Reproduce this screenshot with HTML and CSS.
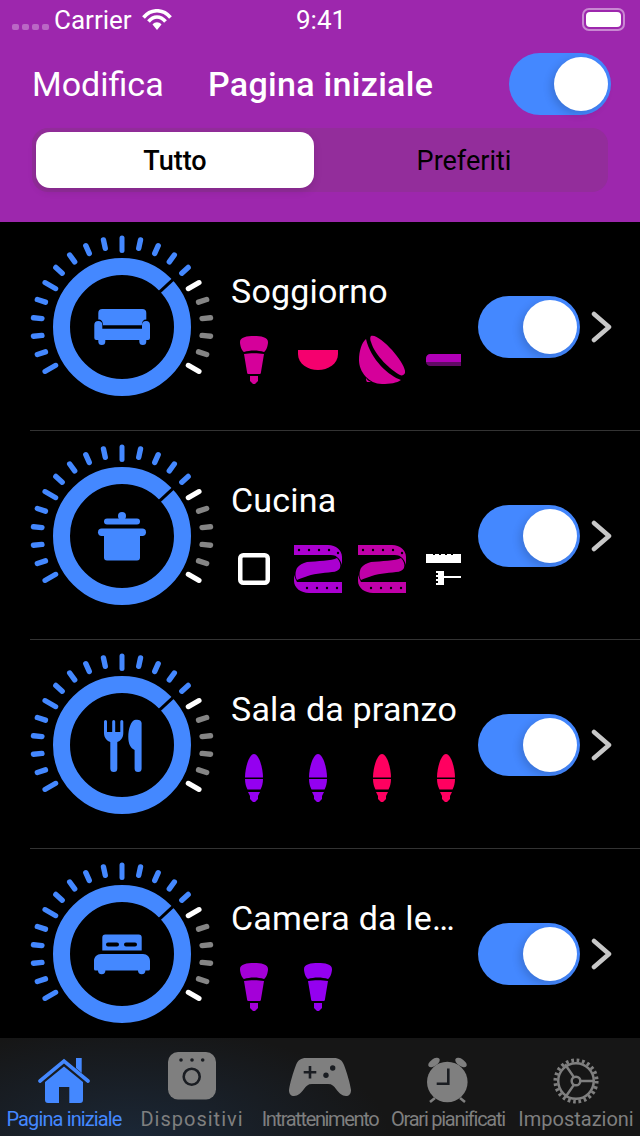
FILE: index.html
```html
<!DOCTYPE html>
<html lang="it">
<head>
    <meta charset="UTF-8">
    <meta name="viewport" content="width=device-width, initial-scale=1.0">
    <title>Pagina iniziale</title>
    <link rel="stylesheet" href="styles.css">
</head>
<body>
    <!-- shared shapes -->
    <svg class="sprite" xmlns="http://www.w3.org/2000/svg">
        <symbol id="dial" viewBox="0 0 184 184">
            <g class="tick tick-blue">
                <line x1="92" y1="3" x2="92" y2="11.5" transform="rotate(-108 92 92)"/>
                <line x1="92" y1="3" x2="92" y2="11.5" transform="rotate(-96 92 92)"/>
                <line x1="92" y1="3" x2="92" y2="11.5" transform="rotate(-84 92 92)"/>
                <line x1="92" y1="3" x2="92" y2="11.5" transform="rotate(-72 92 92)"/>
                <line x1="92" y1="3" x2="92" y2="11.5" transform="rotate(-48 92 92)"/>
                <line x1="92" y1="3" x2="92" y2="11.5" transform="rotate(-36 92 92)"/>
                <line x1="92" y1="3" x2="92" y2="11.5" transform="rotate(-24 92 92)"/>
                <line x1="92" y1="3" x2="92" y2="11.5" transform="rotate(-12 92 92)"/>
                <line x1="92" y1="3" x2="92" y2="11.5" transform="rotate(12 92 92)"/>
                <line x1="92" y1="3" x2="92" y2="11.5" transform="rotate(24 92 92)"/>
                <line x1="92" y1="3" x2="92" y2="11.5" transform="rotate(36 92 92)"/>
                <line x1="92" y1="3" x2="92" y2="11.5" transform="rotate(48 92 92)"/>
                <line class="tick-major" x1="92" y1="3" x2="92" y2="15.5" transform="rotate(-120 92 92)"/>
                <line class="tick-major" x1="92" y1="3" x2="92" y2="15.5" transform="rotate(-60 92 92)"/>
                <line class="tick-major" x1="92" y1="3" x2="92" y2="15.5"/>
            </g>
            <g class="tick tick-gray">
                <line x1="92" y1="3" x2="92" y2="11.5" transform="rotate(72 92 92)"/>
                <line x1="92" y1="3" x2="92" y2="11.5" transform="rotate(84 92 92)"/>
                <line x1="92" y1="3" x2="92" y2="11.5" transform="rotate(96 92 92)"/>
                <line x1="92" y1="3" x2="92" y2="11.5" transform="rotate(108 92 92)"/>
            </g>
            <g class="tick tick-white">
                <line class="tick-major" x1="92" y1="3" x2="92" y2="15.5" transform="rotate(60 92 92)"/>
                <line class="tick-major" x1="92" y1="3" x2="92" y2="15.5" transform="rotate(120 92 92)"/>
            </g>
            <circle class="ring" cx="92" cy="92" r="60.5"/>
            <line class="ring-gap" x1="128.6" y1="57.9" x2="144" y2="43.6"/>
        </symbol>

        <symbol id="cone" viewBox="0 0 46 52">
            <path d="M9 8C9 3 16 2 23 2s14 1 14 6c0 4-2 9-4 10-6-2-14-2-20 0-2-1-4-6-4-10z"/>
            <path d="M13 20c6-1 14-1 20 0l-3 18c0 2-1 2-2 2H18c-1 0-2 0-2-2z"/>
            <path d="M19 42h8v5l-3 3h-2l-3-3z"/>
        </symbol>
        <symbol id="bowl" viewBox="0 0 46 52">
            <path d="M3 16h40v4c0 10-10 16-20 16S3 30 3 20z"/>
        </symbol>
        <symbol id="globe" viewBox="0 0 46 52">
            <path d="M12 2c4-2 14 6 21 14s14 18 13 23c-1 2-3 3-5 2C32 36 16 22 12 8c-1-2-1-5 0-6z"/>
            <path d="M7 5C3 8 0 17 0 26c0 12 10 24 23 24 8 0 15-1 19-4C30 42 12 26 7 5z"/>
            <path d="M7 44c1 2 3 3 5 4H8c-1-1-1-3-1-4z"/>
        </symbol>
        <symbol id="bar" viewBox="0 0 46 52">
            <path class="bar-top" d="M7 20h39v8H3v-4c0-2 2-4 4-4z"/>
            <path class="bar-low" d="M3 28h43v4H7c-2 0-4-2-4-4z"/>
        </symbol>
        <symbol id="square" viewBox="0 0 46 52">
            <rect class="square-line" x="9.250" y="12.250" width="27.500" height="27.500" rx="3"/>
        </symbol>
        <symbol id="strip" viewBox="-1 0 48 52">
            <path d="M-1 2h34c8 0 14 5 14 12v8c-1-3-2-6-5-8-2-2-5-2-9-2H-1z"/>
            <path d="M42 15c3 3 4 7 3 10-1 2-4 4-8 4-9 1-20 2-27 5-3 1-6 2-8 3-2-3-2-8 0-12 2-3 6-5 10-6 10-1 25-1 30-4z"/>
            <path d="M-1 32c1 3 2 5 3 7h45v11H14C6 50-1 45-1 38z"/>
            <g class="strip-dots">
                <circle cx="4" cy="7" r="1.2"/><circle cx="14" cy="7" r="1.2"/><circle cx="24" cy="7" r="1.2"/><circle cx="34" cy="7" r="1.2"/><circle cx="43" cy="10" r="1.2"/>
                <circle cx="12" cy="45" r="1.2"/><circle cx="22" cy="45" r="1.2"/><circle cx="32" cy="45" r="1.2"/><circle cx="42" cy="45" r="1.2"/>
            </g>
        </symbol>
        <symbol id="plug" viewBox="0 0 46 52">
            <path d="M3 11h7v1h2v-1h4v1h2v-1h4v1h2v-1h4v1h2v-1h8v9H3z"/>
            <path d="M15 28h6v5h18v2H21v7h-8v-2h2v-2h-2v-2h2v-2h-2v-2h2v-2h-2v-2h2z"/>
        </symbol>
        <symbol id="candle" viewBox="0 0 46 52">
            <path d="M23 2c5 0 9 14 9 23.500H14C14 16 18 2 23 2z"/>
            <path d="M14 27h18c0 4-1 8-2.500 10.500h-13C15 35 14 31 14 27z"/>
            <path d="M17 40h12l-2 4v3l-3 3h-2l-3-3v-3z"/>
        </symbol>
    </svg>

    <div class="page">
        <header class="top">
            <div class="status">
                <div class="signal"><i></i><i></i><i></i><i></i></div>
                <span class="carrier">Carrier</span>
                <svg class="wifi" viewBox="0 0 30 22">
                    <path d="M1.5 8.5C9-.5 21-.5 28.500 8.500"/>
                    <path d="M6.500 12.500C11.500 6.500 18.500 6.500 23.500 12.500"/>
                    <path class="wifi-tip" d="M10.500 15.500C13 12.500 17 12.500 19.500 15.500L15 21z"/>
                </svg>
                <span class="clock">9:41</span>
                <div class="battery"><b></b></div>
            </div>
            <div class="nav">
                <span class="nav-edit">Modifica</span>
                <span class="nav-title">Pagina iniziale</span>
                <div class="switch switch-nav"><span class="knob"></span></div>
            </div>
            <div class="segment">
                <div class="seg-item seg-on">Tutto</div>
                <div class="seg-item">Preferiti</div>
            </div>
        </header>

        <main class="rooms">
            <section class="room">
                <svg class="dial" viewBox="0 0 184 184">
                    <use href="#dial"/>
                    <g class="room-icon">
                        <path d="M68.300 78a4 4 0 0 1 4-4h40a4 4 0 0 1 4 4v6.500c-3 0-4.500 2-4.500 5.800H73c0-3.800-1.700-5.800-4.700-5.800z"/>
                        <path d="M64.300 90a4 4 0 0 1 8 0v3.700H112V90a4 4 0 0 1 8 0v13a2 2 0 0 1-2 2h-1.700v1.500a3.500 3.500 0 0 1-7 0V105H75.300v1.500a3.500 3.500 0 0 1-7 0V105h-2a2 2 0 0 1-2-2z"/>
                    </g>
                </svg>
                <div class="room-info">
                    <h2 class="room-name">Soggiorno</h2>
                    <div class="bulbs">
                        <svg class="bulb c-pink"><use href="#cone"/></svg>
                        <svg class="bulb c-rose"><use href="#bowl"/></svg>
                        <svg class="bulb c-pink"><use href="#globe"/></svg>
                        <svg class="bulb c-pink"><use href="#bar"/></svg>
                    </div>
                </div>
                <div class="switch"><span class="knob"></span></div>
                <svg class="chevron" viewBox="0 0 22 32"><path d="M4 3l15 13L4 29"/></svg>
            </section>

            <section class="room">
                <svg class="dial" viewBox="0 0 184 184">
                    <use href="#dial"/>
                    <g class="room-icon">
                        <circle cx="92" cy="72" r="4"/>
                        <rect x="74" y="74.500" width="36" height="6" rx="3"/>
                        <rect x="68" y="84.500" width="48" height="7.500" rx="3.700"/>
                        <path d="M74 91h36v22.500a3 3 0 0 1-3 3H77a3 3 0 0 1-3-3z"/>
                    </g>
                </svg>
                <div class="room-info">
                    <h2 class="room-name">Cucina</h2>
                    <div class="bulbs">
                        <svg class="bulb c-white"><use href="#square"/></svg>
                        <svg class="bulb bulb-wide c-violet"><use href="#strip"/></svg>
                        <svg class="bulb bulb-wide c-magenta"><use href="#strip"/></svg>
                        <svg class="bulb c-white"><use href="#plug"/></svg>
                    </div>
                </div>
                <div class="switch"><span class="knob"></span></div>
                <svg class="chevron" viewBox="0 0 22 32"><path d="M4 3l15 13L4 29"/></svg>
            </section>

            <section class="room">
                <svg class="dial" viewBox="0 0 184 184">
                    <use href="#dial"/>
                    <g class="room-icon">
                        <path d="M74 68.500a1.500 1.500 0 0 1 3 0V79h5.200V68.500a1.500 1.500 0 0 1 3 0V79h5.100V68.500a1.500 1.500 0 0 1 3 0V80c0 5-3 8-6 9v26.500a3.500 3.500 0 0 1-7 0V89c-3-1-6.300-4-6.300-9z"/>
                        <path d="M104.500 67c3.500-1 7.100 0 7.100 3v45.500a3.500 3.500 0 0 1-7 0V97c-4.600-2-6.300-7-6.300-13 0-8 2.700-16 6.200-17z"/>
                    </g>
                </svg>
                <div class="room-info">
                    <h2 class="room-name">Sala da pranzo</h2>
                    <div class="bulbs">
                        <svg class="bulb c-purple"><use href="#candle"/></svg>
                        <svg class="bulb c-purple"><use href="#candle"/></svg>
                        <svg class="bulb c-red"><use href="#candle"/></svg>
                        <svg class="bulb c-red"><use href="#candle"/></svg>
                    </div>
                </div>
                <div class="switch"><span class="knob"></span></div>
                <svg class="chevron" viewBox="0 0 22 32"><path d="M4 3l15 13L4 29"/></svg>
            </section>

            <section class="room">
                <svg class="dial" viewBox="0 0 184 184">
                    <use href="#dial"/>
                    <g class="room-icon">
                        <path fill-rule="evenodd" d="M75.300 72.500h33.400a3 3 0 0 1 3 3v13H72.300v-13a3 3 0 0 1 3-3zM78 80.500a2 2 0 0 0 0 4h9a2 2 0 0 0 0-4zM96 80.500a2 2 0 0 0 0 4h9a2 2 0 0 0 0-4z"/>
                        <path d="M71 92h42c4 0 7 3 7 7v8a1.500 1.500 0 0 1-1.500 1.500h-3.100a3.700 3.700 0 0 1-7.400 0H75.400a3.700 3.700 0 0 1-7.400 0h-2.500A1.500 1.500 0 0 1 64 107v-8c0-4 3-7 7-7z"/>
                    </g>
                </svg>
                <div class="room-info">
                    <h2 class="room-name">Camera da letto</h2>
                    <div class="bulbs">
                        <svg class="bulb c-grape"><use href="#cone"/></svg>
                        <svg class="bulb c-purple"><use href="#cone"/></svg>
                    </div>
                </div>
                <div class="switch"><span class="knob"></span></div>
                <svg class="chevron" viewBox="0 0 22 32"><path d="M4 3l15 13L4 29"/></svg>
            </section>
        </main>

        <nav class="tabs">
            <div class="tab tab-on">
                <svg class="tab-icon" width="52" height="48" viewBox="0 0 52 48">
                    <path class="home-roof" d="M2 24L26 4l24 20"/>
                    <path d="M38 1h5.700v15L38 11z"/>
                    <path fill-rule="evenodd" d="M26 9.500L45 25v18a3 3 0 0 1-3 3H31.300V30H21v16H10a3 3 0 0 1-3-3V25z"/>
                </svg>
                <span class="tab-label lbl-home">Pagina iniziale</span>
            </div>
            <div class="tab">
                <svg class="tab-icon icon-dev" width="48" height="48" viewBox="0 0 48 48">
                    <rect y="0" width="48" height="47.500" rx="10"/>
                    <circle class="cut" cx="13" cy="8" r="1.800"/><circle class="cut" cx="24" cy="8" r="1.800"/><circle class="cut" cx="34.700" cy="8" r="1.800"/>
                    <circle class="cut-line" cx="23.700" cy="24.700" r="8"/>
                </svg>
                <span class="tab-label lbl-dev">Dispositivi</span>
            </div>
            <div class="tab">
                <svg class="tab-icon" width="62" height="48" viewBox="0 0 62 48">
                    <path d="M17 1h28c5 0 8 2 10 7 3 8 6 18 7 25 0 4-2 6-5 6-4 0-7-3-10-7-2-3-4-5-8-5H23c-4 0-6 2-8 5-3 4-6 7-10 7-3 0-5-2-5-6 1-7 4-17 7-25 2-5 5-7 10-7z"/>
                    <path class="cut-line" d="M21 9v12.600M14.700 15.300h12.600"/>
                    <circle class="cut" cx="43.700" cy="11" r="2.700"/><circle class="cut" cx="37" cy="18.300" r="2.700"/>
                </svg>
                <span class="tab-label lbl-game">Intrattenimento</span>
            </div>
            <div class="tab">
                <svg class="tab-icon" width="48" height="48" viewBox="0 0 48 48">
                    <ellipse cx="10" cy="5.500" rx="6.500" ry="3.500" transform="rotate(-35 10 5.500)"/>
                    <ellipse cx="37" cy="5.500" rx="6.500" ry="3.500" transform="rotate(35 37 5.500)"/>
                    <path class="clock-leg" d="M6 45l5-4M41 45l-5-4"/>
                    <circle cx="23.300" cy="25" r="20.300"/>
                    <path class="cut-line" d="M24.300 11.500V26.700H12.700"/>
                </svg>
                <span class="tab-label lbl-clock">Orari pianificati</span>
            </div>
            <div class="tab">
                <svg class="tab-icon gear" width="50" height="48" viewBox="0 0 50 50">
                    <circle class="gear-teeth" cx="25" cy="25" r="21.500"/>
                    <circle class="gear-line" cx="25" cy="25" r="18.500"/>
                    <circle class="gear-line" cx="25" cy="25" r="4.500"/>
                    <path class="gear-line" d="M29.500 25H43.500M22.800 21L13.500 7.500M22.800 29L13.500 42.500"/>
                </svg>
                <span class="tab-label lbl-gear">Impostazioni</span>
            </div>
        </nav>
    </div>
</body>
</html>
```

FILE: styles.css
```css
* {
    box-sizing: border-box;
}
body {
    margin: 0;
    background: #000;
    font-family: Roboto, "Liberation Sans", sans-serif;
    color: #fff;
}
.sprite {
    display: none;
}
.page {
    width: 640px;
    height: 1136px;
    display: flex;
    flex-direction: column;
    overflow: hidden;
}

/* header */
.top {
    height: 222px;
    flex: none;
    background: #9d27ad;
}
.status {
    height: 40px;
    display: flex;
    align-items: center;
    padding-left: 12px;
    position: relative;
}
.signal {
    display: flex;
    gap: 3px;
    margin-top: 14px;
}
.signal i {
    width: 7px;
    height: 6px;
    border-radius: 2px;
    background: rgba(255, 255, 255, 0.3);
}
.carrier {
    margin-left: 5px;
    font-size: 26px;
}
.wifi {
    width: 30px;
    height: 22px;
    margin-left: 10px;
    fill: none;
    stroke: #fff;
    stroke-width: 3.6;
}
.wifi-tip {
    fill: #fff;
    stroke: none;
}
.clock {
    position: absolute;
    left: 296px;
    top: 5px;
    font-size: 26px;
}
.battery {
    position: absolute;
    left: 582px;
    top: 8px;
    width: 43px;
    height: 23px;
    padding: 2px;
    border: 2px solid rgba(255, 255, 255, 0.45);
    border-radius: 7px;
}
.battery b {
    display: block;
    height: 100%;
    background: #fff;
    border-radius: 4px;
}
.nav {
    display: flex;
    align-items: center;
    margin-top: 13px;
    padding: 0 29px 0 32px;
}
.nav-edit {
    width: 176px;
    font-size: 34px;
}
.nav-title {
    font-size: 34px;
    font-weight: 500;
    letter-spacing: 0.3px;
}
.switch {
    width: 102px;
    height: 62px;
    flex: none;
    display: flex;
    align-items: center;
    justify-content: flex-end;
    padding-right: 3px;
    border-radius: 31px;
    background: #4488ff;
}
.switch-nav {
    margin-left: auto;
}
.knob {
    width: 54px;
    height: 54px;
    border-radius: 50%;
    background: #fff;
    box-shadow: -3px 3px 8px rgba(0, 0, 0, 0.16);
}
.segment {
    display: flex;
    width: 576px;
    height: 64px;
    margin: 13px 0 0 32px;
    padding: 4px;
    border-radius: 16px;
    background: #932d9b;
}
.seg-item {
    flex: 1;
    display: flex;
    align-items: center;
    justify-content: center;
    padding: 1px 0 0 10px;
    color: #000;
    font-size: 27px;
}
.seg-on {
    flex: none;
    width: 278px;
    padding-left: 0;
    border-radius: 14px;
    background: #fff;
    font-weight: 500;
    box-shadow: 0 3px 8px rgba(0, 0, 0, 0.12);
}

/* room list */
.rooms {
    flex: 1;
    min-height: 0;
    overflow: hidden;
}
.room {
    height: 209px;
    margin-left: 30px;
    padding-top: 2px;
    display: flex;
    align-items: center;
    border-bottom: 1px solid #333;
}
.dial {
    width: 184px;
    height: 184px;
    flex: none;
}
.tick {
    stroke-width: 5.4;
    stroke-linecap: round;
}
.tick-major {
    stroke-width: 5;
}
.tick-blue {
    stroke: #4488ff;
}
.tick-gray {
    stroke: #858585;
}
.tick-white {
    stroke: #fff;
}
.ring {
    fill: none;
    stroke: #4488ff;
    stroke-width: 17;
}
.ring-gap {
    stroke: #000;
    stroke-width: 3;
}
.room-icon {
    fill: #4488ff;
}
.room-info {
    width: 232px;
    flex: none;
    margin: 0 16px 0 16px;
    padding: 3px 1px 0 1px;
}
.room-name {
    margin: 0;
    font-size: 34px;
    font-weight: 400;
    letter-spacing: 0.2px;
    line-height: 40px;
    white-space: nowrap;
    overflow: hidden;
    text-overflow: ellipsis;
}
.bulbs {
    display: flex;
    gap: 18px;
    height: 52px;
    margin-top: 23px;
    overflow: hidden;
}
.bulb {
    width: 46px;
    height: 52px;
    flex: none;
    overflow: visible;
    fill: currentColor;
}
.bulb-wide {
    width: 48px;
    margin: 0 -1px;
}
.c-pink { color: #d5009a; }
.c-rose { color: #f5006e; }
.c-violet { color: #aa00d0; }
.c-magenta { color: #c000a8; }
.c-purple { color: #9400f0; }
.c-grape { color: #a400d8; }
.c-red { color: #ff0060; }
.c-white { color: #fff; }
.bar-top {
    fill: #b200b8;
}
.bar-low {
    fill: #620a66;
}
.square-line {
    fill: none;
    stroke: currentColor;
    stroke-width: 4.5;
}
.strip-dots {
    fill: #000;
}
.chevron {
    width: 22px;
    height: 32px;
    flex: none;
    margin-left: 10px;
    fill: none;
    stroke: #c8c8c8;
    stroke-width: 4.5;
    stroke-linecap: round;
    stroke-linejoin: round;
}

/* tab bar */
.tabs {
    height: 98px;
    flex: none;
    display: grid;
    grid-template-columns: repeat(5, 128px);
    background: radial-gradient(ellipse 260px 110px at 130px 100%, #1b2736, rgba(27, 39, 54, 0)), #161616;
}
.tab {
    display: flex;
    flex-direction: column;
    align-items: center;
    padding-top: 19px;
    color: #7f7f7f;
    fill: #7f7f7f;
    position: relative;
}
.tab-on {
    color: #4488ff;
    fill: #4488ff;
}
.tab-icon {
    height: 48px;
    flex: none;
}
.icon-dev {
    margin: -5px 0 5px;
}
.tab-label {
    margin-top: 2px;
    font-size: 20px;
    line-height: 24px;
    white-space: nowrap;
}
.lbl-home {
    letter-spacing: -0.87px;
}
.lbl-dev {
    letter-spacing: 1px;
}
.lbl-game {
    letter-spacing: -1.35px;
}
.lbl-clock {
    letter-spacing: -1.25px;
}
.home-roof {
    fill: none;
    stroke: #4488ff;
    stroke-width: 3.6;
    stroke-linecap: round;
}
.cut {
    fill: #1a1d22;
}
.cut-line {
    fill: none;
    stroke: #1a1d22;
    stroke-width: 2.6;
}
.clock-leg {
    fill: none;
    stroke: #7f7f7f;
    stroke-width: 2.6;
}
.gear-teeth {
    fill: none;
    stroke: #7f7f7f;
    stroke-width: 4;
    stroke-dasharray: 2.8 2.83;
}
.gear-line {
    fill: none;
    stroke: #7f7f7f;
    stroke-width: 2.6;
}
```
